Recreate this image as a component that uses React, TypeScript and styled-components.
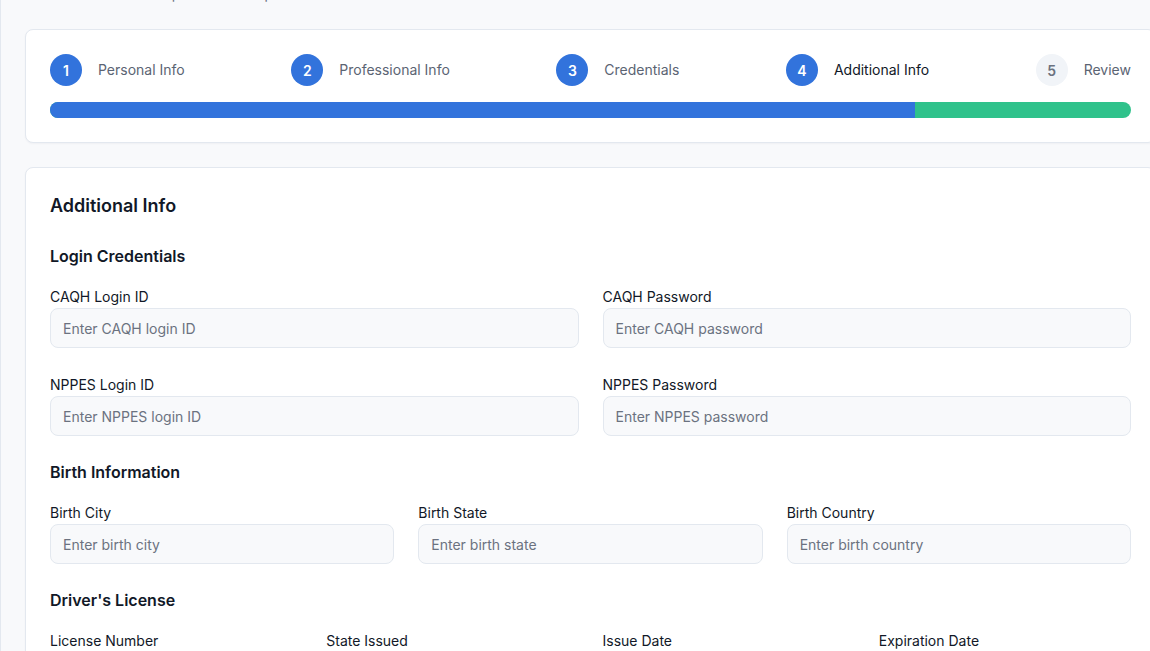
import React from "react";
import styled, { createGlobalStyle } from "styled-components";

const GlobalStyle = createGlobalStyle`
  html, body {
    margin: 0;
    padding: 0;
    overflow: hidden;
    background: #f8f9fb;
  }
  body {
    font-family: Inter, "Noto Sans", "Liberation Sans", sans-serif;
    color: #111827;
    -webkit-font-smoothing: antialiased;
  }
  * { box-sizing: border-box; }
`;

const Main = styled.main`
  width: 1180px;
  min-height: 651px;
  border-left: 1px solid #e3e8ef;
  padding: 0 24px 24px;
  background: #f8f9fb;
`;

const Header = styled.header`
  margin-top: -48px;
  margin-bottom: 25px;
  display: flex;
  flex-direction: column;
`;

const PageTitle = styled.h1`
  margin: 0;
  font-size: 24px;
  line-height: 32px;
  font-weight: 700;
  color: #111827;
`;

const PageSubtitle = styled.p`
  margin: 0;
  font-size: 14px;
  line-height: 20px;
  color: #6b7280;
`;

const Card = styled.section<{ $gapTop?: number }>`
  background: #ffffff;
  border: 1px solid #e3e8ef;
  border-radius: 8px;
  box-shadow: 0 1px 2px rgba(15, 23, 42, 0.04);
  padding: 24px;
  margin-top: ${(p) => p.$gapTop ?? 0}px;
`;

const StepsRow = styled.div`
  display: flex;
  justify-content: space-between;
  align-items: center;
`;

const Step = styled.div`
  display: flex;
  align-items: center;
  gap: 16px;
`;

const StepCircle = styled.div<{ $done: boolean }>`
  width: 32px;
  height: 32px;
  border-radius: 50%;
  display: flex;
  align-items: center;
  justify-content: center;
  font-size: 14px;
  font-weight: 600;
  background: ${(p) => (p.$done ? "#3273dc" : "#f1f4f8")};
  color: ${(p) => (p.$done ? "#ffffff" : "#6b7280")};
`;

const StepLabel = styled.span<{ $active: boolean }>`
  font-size: 14px;
  line-height: 20px;
  font-weight: 400;
  color: ${(p) => (p.$active ? "#111827" : "#5b6473")};
`;

const Track = styled.div`
  margin-top: 16px;
  height: 16px;
  border-radius: 9999px;
  background: #2fc28b;
  overflow: hidden;
`;

const Fill = styled.div`
  height: 100%;
  background: #3273dc;
`;

const FormTitle = styled.h2`
  margin: 0;
  font-size: 18px;
  line-height: 28px;
  font-weight: 600;
  color: #111827;
`;

const Section = styled.div`
  margin-top: 24px;
`;

const SectionTitle = styled.h3`
  margin: 0 0 19px;
  font-size: 16px;
  line-height: 24px;
  font-weight: 600;
  color: #111827;
`;

const Grid = styled.div<{ $cols: number }>`
  display: grid;
  grid-template-columns: repeat(${(p) => p.$cols}, minmax(0, 1fr));
  column-gap: 24px;
  row-gap: 27px;
`;

const Field = styled.div`
  display: flex;
  flex-direction: column;
`;

const Label = styled.label`
  display: block;
  font-size: 14px;
  line-height: 20px;
  font-weight: 400;
  color: #111827;
  margin-bottom: 1px;
`;

const Input = styled.input`
  height: 40px;
  width: 100%;
  padding: 0 12px;
  border: 1px solid #e3e8ef;
  border-radius: 8px;
  background: #f8f9fb;
  font-family: inherit;
  font-size: 14px;
  color: #111827;
  outline: none;
  &::placeholder {
    color: #6b7280;
  }
`;

const steps = [
  "Personal Info",
  "Professional Info",
  "Credentials",
  "Additional Info",
  "Review",
];
const current = 4;

type F = { label: string; placeholder?: string };

const FieldBox = ({ label, placeholder }: F) => (
  <Field>
    <Label>{label}</Label>
    {placeholder !== undefined && <Input placeholder={placeholder} />}
  </Field>
);

export default function App() {
  return (
    <>
      <GlobalStyle />
      <Main>
        <Header>
          <PageTitle>Provider Onboarding</PageTitle>
          <PageSubtitle>Share more about the provider and qualifications.</PageSubtitle>
        </Header>

        <Card>
          <StepsRow>
            {steps.map((s, i) => (
              <Step key={s}>
                <StepCircle $done={i + 1 <= current}>{i + 1}</StepCircle>
                <StepLabel $active={i + 1 === current}>{s}</StepLabel>
              </Step>
            ))}
          </StepsRow>
          <Track>
            <Fill style={{ width: `${(current / steps.length) * 100}%` }} />
          </Track>
        </Card>

        <Card $gapTop={24}>
          <FormTitle>Additional Info</FormTitle>

          <Section>
            <SectionTitle>Login Credentials</SectionTitle>
            <Grid $cols={2}>
              <FieldBox label="CAQH Login ID" placeholder="Enter CAQH login ID" />
              <FieldBox label="CAQH Password" placeholder="Enter CAQH password" />
              <FieldBox label="NPPES Login ID" placeholder="Enter NPPES login ID" />
              <FieldBox label="NPPES Password" placeholder="Enter NPPES password" />
            </Grid>
          </Section>

          <Section>
            <SectionTitle>Birth Information</SectionTitle>
            <Grid $cols={3}>
              <FieldBox label="Birth City" placeholder="Enter birth city" />
              <FieldBox label="Birth State" placeholder="Enter birth state" />
              <FieldBox label="Birth Country" placeholder="Enter birth country" />
            </Grid>
          </Section>

          <Section>
            <SectionTitle>Driver's License</SectionTitle>
            <Grid $cols={4}>
              <FieldBox label="License Number" placeholder="Enter license number" />
              <FieldBox label="State Issued" placeholder="Enter state" />
              <FieldBox label="Issue Date" placeholder="mm/dd/yyyy" />
              <FieldBox label="Expiration Date" placeholder="mm/dd/yyyy" />
            </Grid>
          </Section>
        </Card>
      </Main>
    </>
  );
}
